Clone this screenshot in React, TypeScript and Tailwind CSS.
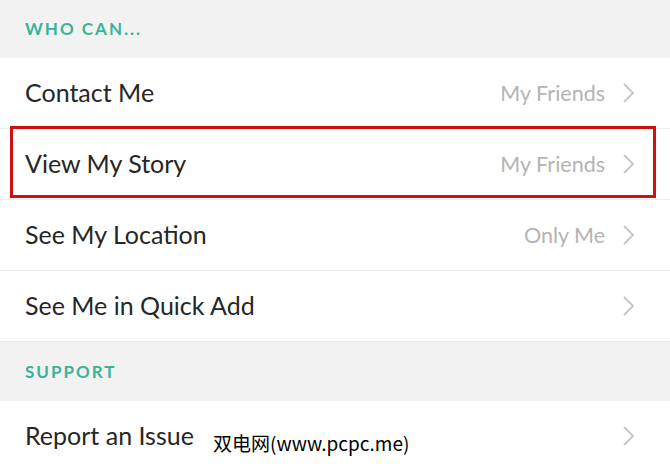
import React from 'react';

interface Row {
  label: string;
  value?: string;
  highlight?: boolean;
}

const whoCan: Row[] = [
  { label: 'Contact Me', value: 'My Friends' },
  { label: 'View My Story', value: 'My Friends', highlight: true },
  { label: 'See My Location', value: 'Only Me' },
  { label: 'See Me in Quick Add' },
];

function Chevron() {
  return (
    <svg width="14" height="22" viewBox="0 0 14 22" className="shrink-0">
      <path d="M2 2 L11 11 L2 20" fill="none" stroke="#c4c4c4" strokeWidth="1.8" />
    </svg>
  );
}

function SectionHeader({ title }: { title: string }) {
  return (
    <div className="flex items-center bg-[#f2f2f2] px-[25px] text-[17px] font-bold tracking-[2px] text-[#3ab397]">
      {title}
    </div>
  );
}

function SettingRow({ label, value, highlight }: Row) {
  return (
    <div className="relative flex h-[71px] items-center border-b border-[#ececec] bg-white pl-[25px] pr-[34px]">
      <span className="flex-1 text-[25px] text-[#262626]">{label}</span>
      {value && <span className="mr-[17px] text-[21.5px] text-[#b4b4b4]">{value}</span>}
      <Chevron />
      {highlight && (
        <div className="absolute left-[10px] right-[14px] top-[-3px] bottom-[1px] border-[3px] border-[#cc1111]" />
      )}
    </div>
  );
}

export default function App() {
  return (
    <div className="relative h-[470px] w-[670px] overflow-hidden bg-white font-['Lato',sans-serif]">
      <div className="grid grid-rows-[58px_71px_71px_71px_71px_59px_70px]">
        <SectionHeader title="WHO CAN..." />
        {whoCan.map((row) => (
          <SettingRow key={row.label} {...row} />
        ))}
        <SectionHeader title="SUPPORT" />
        <SettingRow label="Report an Issue" />
      </div>
      <div className="absolute left-[213px] top-[429px] font-['Noto_Sans_CJK_SC',sans-serif] text-[19px] text-black">
        双电网(www.pcpc.me)
      </div>
    </div>
  );
}
